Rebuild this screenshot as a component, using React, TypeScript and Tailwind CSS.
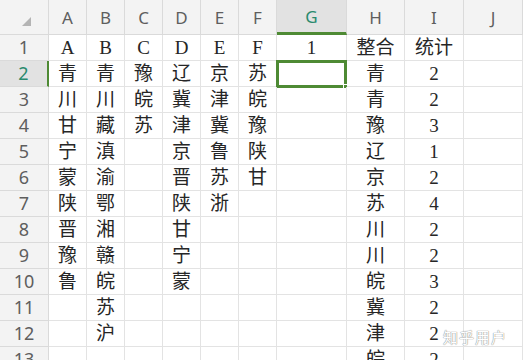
import React from 'react';

const cols = ['A', 'B', 'C', 'D', 'E', 'F', 'G', 'H', 'I', 'J'];

const rows: string[][] = [
  ['A', 'B', 'C', 'D', 'E', 'F', '1', '整合', '统计', ''],
  ['青', '青', '豫', '辽', '京', '苏', '', '青', '2', ''],
  ['川', '川', '皖', '冀', '津', '皖', '', '青', '2', ''],
  ['甘', '藏', '苏', '津', '冀', '豫', '', '豫', '3', ''],
  ['宁', '滇', '', '京', '鲁', '陕', '', '辽', '1', ''],
  ['蒙', '渝', '', '晋', '苏', '甘', '', '京', '2', ''],
  ['陕', '鄂', '', '陕', '浙', '', '', '苏', '4', ''],
  ['晋', '湘', '', '甘', '', '', '', '川', '2', ''],
  ['豫', '赣', '', '宁', '', '', '', '川', '2', ''],
  ['鲁', '皖', '', '蒙', '', '', '', '皖', '3', ''],
  ['', '苏', '', '', '', '', '', '冀', '2', ''],
  ['', '沪', '', '', '', '', '', '津', '2', ''],
  ['', '', '', '', '', '', '', '皖', '2', ''],
];

const cellFont = { fontFamily: '"Liberation Serif", "Noto Sans CJK SC", serif' };
const headFont = { fontFamily: '"Noto Sans", "Liberation Sans", sans-serif' };

export default function App() {
  return (
    <div className="relative w-[523px] h-[360px] overflow-hidden bg-white">
      <div className="grid grid-cols-[49px_38px_38px_38px_38px_38px_38px_70px_58px_59px_1fr]">
        {/* corner */}
        <div className="h-[35px] bg-[#f3f3f3] border-r border-b border-[#dadada] flex items-end justify-center pb-[8px]">
          <svg width="9" height="9" viewBox="0 0 9 9" className="ml-[4px]">
            <polygon points="9,0 9,9 0,9" fill="#b4b4b4" />
          </svg>
        </div>
        {cols.map((c) => (
          <div
            key={c}
            style={headFont}
            className={
              c === 'G'
                ? 'h-[35px] bg-[#e2e2e2] border-r border-b-[3px] border-r-[#dadada] border-b-[#4e8a34] flex items-end justify-center pb-[3px] text-[17px] text-[#2a8a6e]'
                : 'h-[35px] bg-[#f3f3f3] border-r border-b border-[#dadada] flex items-end justify-center pb-[4px] text-[17px] text-[#5e5e5e]'
            }
          >
            {c}
          </div>
        ))}
        {rows.map((r, i) => (
          <React.Fragment key={i}>
            <div
              style={headFont}
              className={
                i === 1
                  ? 'h-[26px] bg-[#e2e2e2] border-b border-r-[2px] border-b-[#dadada] border-r-[#4e8a34] flex items-center justify-center text-[18px] text-[#2a8a6e]'
                  : 'h-[26px] bg-[#f3f3f3] border-b border-r border-[#dadada] flex items-center justify-center text-[18px] text-[#5e5e5e]'
              }
            >
              {i + 1}
            </div>
            {r.map((v, j) => (
              <div
                key={j}
                style={cellFont}
                className="relative h-[26px] border-r border-b border-[#e3e3e3] flex items-end justify-center text-[19px] leading-[24px] font-normal text-[#262626]"
              >
                {v}
                {i === 1 && j === 6 && (
                  <div className="absolute -left-[1px] -top-[1px] w-[71px] h-[28px] border-[3px] border-[#4e8a34]">
                    <div className="absolute -right-[4px] -bottom-[4px] w-[5px] h-[5px] bg-[#4e8a34] border border-white" />
                  </div>
                )}
              </div>
            ))}
          </React.Fragment>
        ))}
      </div>
      <div
        className="absolute left-[443px] top-[326px] text-[15px] text-white tracking-[1px]"
        style={{
          fontFamily: '"Noto Sans CJK SC", sans-serif',
          textShadow: '0 0 1px #8a8a8a, 0 0 1px #8a8a8a',
        }}
      >
        知乎用户
      </div>
    </div>
  );
}
